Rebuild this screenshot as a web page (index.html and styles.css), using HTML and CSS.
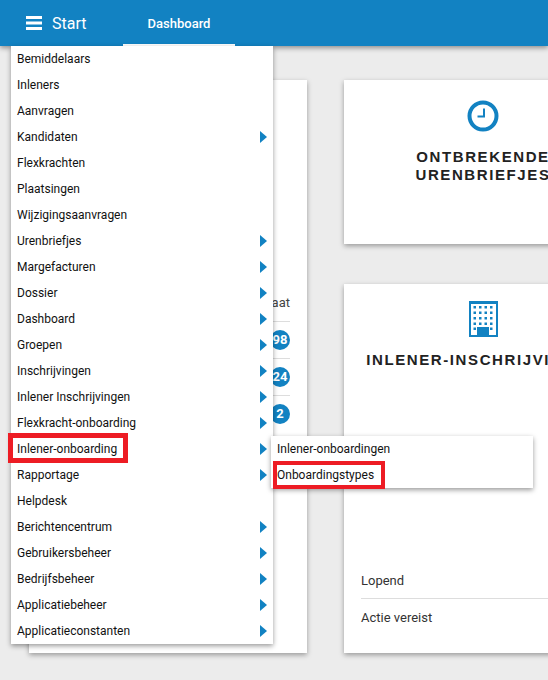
FILE: index.html
```html
<!DOCTYPE html>
<html lang="nl">
  <head>
    <meta charset="UTF-8" />
    <meta name="viewport" content="width=device-width, initial-scale=1.0" />
    <title>Dashboard</title>
    <link rel="stylesheet" href="styles.css">
  </head>
  <body>
    <header class="topbar">
      <div class="start">
        <svg class="burger" width="16" height="14" viewBox="0 0 16 14">
          <rect y="0" width="16" height="3" fill="#fff" />
          <rect y="5.5" width="16" height="3" fill="#fff" />
          <rect y="11" width="16" height="3" fill="#fff" />
        </svg>
        <span>Start</span>
      </div>
      <a class="tab" href="#">Dashboard</a>
    </header>

    <main class="content">
      <section class="card card-left">
        <div class="row row-head">Resultaat</div>
        <div class="row"><span class="badge">98</span></div>
        <div class="row"><span class="badge">24</span></div>
        <div class="row"><span class="badge">2</span></div>
      </section>

      <div class="column">
        <section class="card card-short">
          <svg class="icon" width="32" height="32" viewBox="0 0 32 32">
            <circle cx="16" cy="16" r="13.5" fill="none" stroke="#1282c2" stroke-width="4" />
            <path d="M18 8.5V17.5H10.5V15.5H16V8.5Z" fill="#1282c2" />
          </svg>
          <h2>Ontbrekende<br />urenbriefjes</h2>
        </section>

        <section class="card card-tall">
          <svg class="icon" width="29" height="36" viewBox="0 0 29 36">
            <path d="M0 0H29V36H18V28H10V36H0ZM2 3V34H8V26H20V34H27V3Z" fill="#1282c2" />
            <rect x="10" y="28" width="8" height="8" fill="#1282c2" />
            <g fill="#1282c2">
              <rect x="4.5" y="5" width="2.5" height="2.5" />
              <rect x="10" y="5" width="2.5" height="2.5" />
              <rect x="15.5" y="5" width="2.5" height="2.5" />
              <rect x="21" y="5" width="2.5" height="2.5" />
              <rect x="4.5" y="10.5" width="2.5" height="2.5" />
              <rect x="10" y="10.5" width="2.5" height="2.5" />
              <rect x="15.5" y="10.5" width="2.5" height="2.5" />
              <rect x="21" y="10.5" width="2.5" height="2.5" />
              <rect x="4.5" y="16" width="2.5" height="2.5" />
              <rect x="10" y="16" width="2.5" height="2.5" />
              <rect x="15.5" y="16" width="2.5" height="2.5" />
              <rect x="21" y="16" width="2.5" height="2.5" />
              <rect x="4.5" y="21.5" width="2.5" height="2.5" />
              <rect x="10" y="21.5" width="2.5" height="2.5" />
              <rect x="15.5" y="21.5" width="2.5" height="2.5" />
              <rect x="21" y="21.5" width="2.5" height="2.5" />
              <rect x="4.5" y="26.5" width="2.5" height="2.5" />
              <rect x="21" y="26.5" width="2.5" height="2.5" />
            </g>
          </svg>
          <h2 class="nowrap">Inlener-inschrijvingen</h2>
          <div class="rows-bottom">
            <div class="row row-first"><span>Lopend</span></div>
            <div class="row"><span>Actie vereist</span></div>
          </div>
        </section>
      </div>
    </main>

    <ul class="menu">
      <li>Bemiddelaars</li>
      <li>Inleners</li>
      <li>Aanvragen</li>
      <li class="more">Kandidaten</li>
      <li>Flexkrachten</li>
      <li>Plaatsingen</li>
      <li>Wijzigingsaanvragen</li>
      <li class="more">Urenbriefjes</li>
      <li class="more">Margefacturen</li>
      <li class="more">Dossier</li>
      <li class="more">Dashboard</li>
      <li class="more">Groepen</li>
      <li class="more">Inschrijvingen</li>
      <li class="more">Inlener Inschrijvingen</li>
      <li class="more">Flexkracht-onboarding</li>
      <li class="more marked">Inlener-onboarding</li>
      <li class="more">Rapportage</li>
      <li>Helpdesk</li>
      <li class="more">Berichtencentrum</li>
      <li class="more">Gebruikersbeheer</li>
      <li class="more">Bedrijfsbeheer</li>
      <li class="more">Applicatiebeheer</li>
      <li class="more">Applicatieconstanten</li>
    </ul>

    <ul class="menu submenu">
      <li>Inlener-onboardingen</li>
      <li class="marked">Onboardingstypes</li>
    </ul>
  </body>
</html>
```

FILE: styles.css
```css
html,
body {
  height: 100%;
}
body {
  font-family: Roboto, Arial, sans-serif;
  margin: 0;
  background-color: #ececec;
  color: #333;
  overflow: hidden;
}

.topbar {
  display: flex;
  height: 46px;
  background-color: #1282c2;
  box-shadow: 0 2px 5px rgba(0, 0, 0, 0.4);
  color: white;
}
.start {
  display: flex;
  align-items: center;
  gap: 10px;
  width: 123px;
  padding-left: 26px;
  box-sizing: border-box;
  font-size: 16px;
}
.burger {
  margin-top: -1px;
}
.tab {
  width: 112px;
  box-sizing: border-box;
  border-bottom: 2px solid white;
  color: white;
  font-size: 13px;
  font-weight: 500;
  line-height: 48px;
  text-align: center;
  text-decoration: none;
}

.content {
  display: flex;
  gap: 37px;
  padding: 34px 0 0 29px;
  width: 700px;
}
.column {
  display: flex;
  flex-direction: column;
  gap: 40px;
  width: 278px;
}
.card {
  background-color: white;
  box-shadow: 0 2px 5px rgba(0, 0, 0, 0.35);
  box-sizing: border-box;
}
.card-left {
  width: 278px;
  height: 573px;
  padding: 209px 17px 0 16px;
  font-size: 13px;
}
.card-left .row {
  justify-content: flex-end;
}
.card-short {
  height: 164px;
  padding-top: 20px;
  text-align: center;
}
.card-short h2 {
  margin-top: 16px;
}
.card-tall {
  height: 369px;
  padding: 17px 17px 0;
  text-align: center;
  display: flex;
  flex-direction: column;
  align-items: center;
}
.icon {
  display: block;
  margin: 0 auto;
}
h2 {
  margin: 14px 0 0;
  font-family: "Liberation Sans", Arial, sans-serif;
  font-size: 15px;
  line-height: 18px;
  font-weight: 700;
  letter-spacing: 1.6px;
  text-transform: uppercase;
  color: #222;
}
.nowrap {
  white-space: nowrap;
}

.row {
  display: flex;
  align-items: center;
  justify-content: space-between;
  height: 37px;
  border-top: 1px solid #ddd;
  box-sizing: border-box;
}
.row-head {
  height: 32px;
  padding-bottom: 6px;
  border-top: none;
  color: #444;
}
.row:first-child {
  border-top: none;
}
.row-first {
  padding-top: 2px;
}
.badge {
  width: 20px;
  height: 20px;
  border-radius: 50%;
  background-color: #1282c2;
  color: white;
  font-size: 13px;
  font-weight: 700;
  line-height: 20px;
  text-align: center;
}
.rows-bottom {
  width: 100%;
  margin-top: auto;
  margin-bottom: 18px;
  font-size: 13px;
  text-align: left;
}

.menu {
  position: absolute;
  top: 46px;
  left: 11px;
  width: 262px;
  margin: 0;
  padding: 0;
  list-style: none;
  background-color: white;
  box-shadow: 0 2px 5px rgba(0, 0, 0, 0.4);
  color: #111;
  font-size: 12px;
}
.menu li {
  position: relative;
  height: 26px;
  line-height: 26px;
  padding-left: 6px;
}
.more::after {
  content: "";
  position: absolute;
  top: 7px;
  right: 6px;
  border-left: 7px solid #1282c2;
  border-top: 6px solid transparent;
  border-bottom: 6px solid transparent;
}
.marked::before {
  content: "";
  position: absolute;
  top: -3px;
  left: -3px;
  width: 120px;
  height: 30px;
  border: 5px solid #ed1c24;
  box-sizing: border-box;
}
.submenu {
  top: 436px;
  left: 271px;
}
.submenu .marked::before {
  top: -1px;
  left: 2px;
  width: 112px;
  height: 28px;
  border-width: 4px;
}
```
